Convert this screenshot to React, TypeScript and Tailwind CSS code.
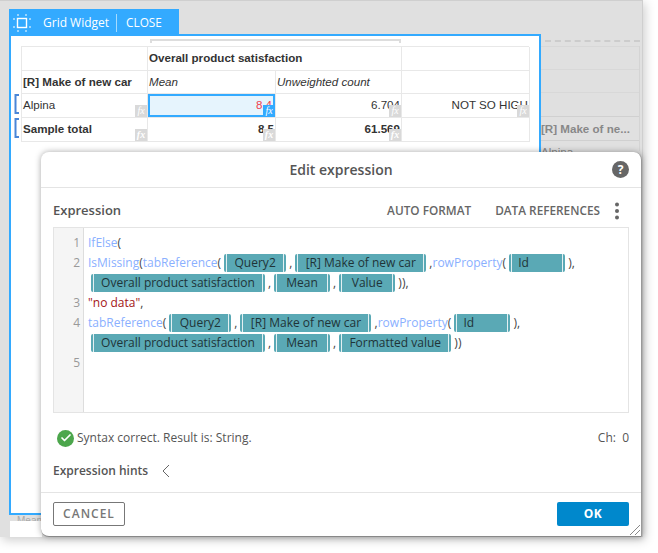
import { Check } from 'lucide-react';

const sans = "font-['Liberation_Sans',Arial,sans-serif]";
const open = "font-['Open_Sans',sans-serif]";

function Fx({ active }: { active?: boolean }) {
  return (
    <span className={`absolute right-0 bottom-0 flex h-[12px] w-[12px] items-center justify-center font-['Liberation_Serif',serif] text-[10px] italic leading-none text-white ${active ? 'bg-[#33aaff]' : 'bg-[#d9d9d9]'}`}>
      fx
    </span>
  );
}

function Bracket({ top }: { top: number }) {
  return (
    <svg className="absolute left-[-8px]" style={{ top }} width="6" height="20" viewBox="0 0 6 20" fill="none">
      <path d="M5 1H1.5V19H5" stroke="#4a86d8" strokeWidth="2" />
    </svg>
  );
}

function Cell({ children, className = '', fx, active }: { children?: React.ReactNode; className?: string; fx?: boolean; active?: boolean }) {
  return (
    <div className={`relative flex items-center overflow-hidden border-r border-b border-[#e8e8e8] px-[1px] pb-[1px] text-[11.6px] text-[#333] ${className}`}>
      {children}
      {fx && <Fx active={active} />}
    </div>
  );
}

function GridTable() {
  return (
    <div className={`relative grid w-[508px] grid-cols-[126px_128px_126px_128px] grid-rows-[24px_23px_24px_24px] border-t border-l border-[#e8e8e8] ${sans}`}>
      <Cell />
      <Cell className="col-span-2 font-bold">Overall product satisfaction</Cell>
      <Cell />
      <Cell className="font-bold">[R] Make of new car</Cell>
      <Cell className="italic">Mean</Cell>
      <Cell className="italic">Unweighted count</Cell>
      <Cell />
      <Cell fx>Alpina</Cell>
      <Cell fx active className="justify-end bg-[#e6f4fd] pr-[3px] text-[#f04050] shadow-[inset_0_0_0_2px_#33aaff]">8.4</Cell>
      <Cell fx className="justify-end">6.704</Cell>
      <Cell fx className="justify-end">NOT SO HIGH</Cell>
      <Cell fx className="font-bold">Sample total</Cell>
      <Cell fx className="justify-end font-bold">8.5</Cell>
      <Cell fx className="justify-end font-bold">61.569</Cell>
      <Cell />
      <Bracket top={47} />
      <Bracket top={71} />
    </div>
  );
}

function Token({ label, w, left }: { label: string; w: number; left?: boolean }) {
  return (
    <span style={{ width: w }} className="inline-flex h-[18px] shrink-0 rounded-[2px] border-x-2 border-[#5aa9b5]">
      <span className={`flex flex-1 items-center border-x border-[#e4f0f2] bg-[#5aa9b5] text-[#1f3438] ${left ? 'pl-[6px]' : 'justify-center'}`}>
        {label}
      </span>
    </span>
  );
}

function Sep() {
  return <span className="mx-[3px]">,</span>;
}

function Fn({ children }: { children: React.ReactNode }) {
  return <span className="text-[#8ab0ff]">{children}</span>;
}

function Line({ children, indent }: { children?: React.ReactNode; indent?: boolean }) {
  return <div className={`flex h-[20px] items-center whitespace-pre ${indent ? 'pl-[7px]' : 'pl-[4px]'}`}>{children}</div>;
}

function Editor() {
  return (
    <div className="flex h-[186px] border border-[#e4e4e4] text-[12px] leading-[20px] text-[#444]">
      <div className="w-[30px] shrink-0 border-r border-[#dddddd] bg-[#f5f5f5] pt-[5px] pr-[3px] text-right text-[#999]">
        <div>1</div>
        <div>2</div>
        <div className="h-[20px]" />
        <div>3</div>
        <div>4</div>
        <div className="h-[20px]" />
        <div>5</div>
      </div>
      <div className="flex-1 pt-[5px]">
        <Line><Fn>IfElse</Fn>(</Line>
        <Line>
          <Fn>IsMissing</Fn>(<Fn>tabReference</Fn>( <Token label="Query2" w={62} /><Sep /><Token label="[R] Make of new car" w={131} /> ,<Fn>rowProperty</Fn>( <Token label="Id" w={56} left /> ),
        </Line>
        <Line indent>
          <Token label="Overall product satisfaction" w={174} /><Sep /><Token label="Mean" w={56} /><Sep /><Token label="Value" w={56} /> )),
        </Line>
        <Line><span className="text-[#a31515]">"no data"</span>,</Line>
        <Line>
          <Fn>tabReference</Fn>( <Token label="Query2" w={62} /><Sep /><Token label="[R] Make of new car" w={131} /> ,<Fn>rowProperty</Fn>( <Token label="Id" w={56} left /> ),
        </Line>
        <Line indent>
          <Token label="Overall product satisfaction" w={174} /><Sep /><Token label="Mean" w={56} /><Sep /><Token label="Formatted value" w={112} /> ))
        </Line>
      </div>
    </div>
  );
}

function Dialog() {
  return (
    <div className={`absolute top-[152px] left-[41px] flex h-[385px] w-[601px] flex-col rounded-t-[8px] rounded-bl-[8px] border-r border-b border-r-[#999] border-b-[#888] bg-white shadow-[0_0_6px_rgba(0,0,0,0.35)] ${open}`}>
      <div className="relative flex h-[36px] shrink-0 items-center justify-center border-b border-[#e4e4e4] text-[14px] font-semibold text-[#555]">
        Edit expression
        <span className="absolute top-[9px] right-[12px] flex h-[17px] w-[17px] items-center justify-center rounded-full bg-[#666] text-[12px] font-bold text-white">?</span>
      </div>
      <div className="flex h-[39px] shrink-0 items-center justify-between px-[12px] pt-[6px] text-[#666]">
        <span className="text-[13px] font-semibold text-[#555]">Expression</span>
        <div className="flex items-center pr-[9px] text-[11.8px] font-semibold">
          <span>AUTO FORMAT</span>
          <span className="ml-[24px]">DATA REFERENCES</span>
          <svg className="ml-[14px]" width="6" height="18" viewBox="0 0 6 18" fill="#666">
            <circle cx="3" cy="2.5" r="2" />
            <circle cx="3" cy="9" r="2" />
            <circle cx="3" cy="15.5" r="2" />
          </svg>
        </div>
      </div>
      <div className="px-[12px]">
        <Editor />
      </div>
      <div className="flex h-[50px] shrink-0 items-center justify-between px-[12px] pl-[16px] text-[12px] text-[#555]">
        <div className="flex items-center">
          <span className="mr-[3px] flex h-[17px] w-[17px] items-center justify-center rounded-full bg-[#4ca64c]">
            <Check size={12} strokeWidth={3.5} color="#fff" />
          </span>
          Syntax correct. Result is: String.
        </div>
        <span>Ch:&nbsp; 0</span>
      </div>
      <div className="flex h-[16px] shrink-0 items-center px-[12px] text-[12px] font-semibold text-[#555]">
        Expression hints
        <svg className="ml-[14px]" width="8" height="14" viewBox="0 0 8 14" fill="none" stroke="#666">
          <path d="M7 1L1 7L7 13" />
        </svg>
      </div>
      <div className="mt-[13px] flex h-[45px] shrink-0 items-start justify-between border-t border-[#e4e4e4] px-[12px] pt-[9px]">
        <button className="h-[24px] w-[72px] rounded-[2px] border border-[#777] text-[12px] font-semibold tracking-[1px] text-[#777]">CANCEL</button>
        <button className="h-[24px] w-[72px] rounded-[2px] bg-[#0088cc] text-[12px] font-bold tracking-[0.5px] text-white">OK</button>
      </div>
      <svg className="absolute right-0 bottom-0" width="12" height="12" viewBox="0 0 12 12" stroke="#888" fill="none">
        <path d="M1 11L11 1M6 11L11 6" />
      </svg>
    </div>
  );
}

function Widget() {
  return (
    <div className="absolute top-[9px] left-[9px] flex h-[506px] w-[532px] flex-col">
      <div className={`flex h-[25px] w-[170px] shrink-0 items-center bg-[#33aaff] pt-[3px] text-[12px] text-white ${open}`}>
        <svg className="ml-[3px]" width="20" height="20" viewBox="0 0 20 20" fill="none" stroke="#fff">
          <rect x="5.5" y="5.5" width="9" height="9" strokeWidth="1.4" />
          <path d="M6 1v2M14 1v2M6 17v2M14 17v2M1 6h2M1 14h2M17 6h2M17 14h2" />
        </svg>
        <span className="ml-[11px] font-medium">Grid Widget</span>
        <span className="mr-[9px] ml-[7px] h-[18px] w-px bg-[#a5dbff]" />
        <span className="text-[11.8px]">CLOSE</span>
      </div>
      <div className="relative flex-1 border-2 border-[#33aaff] bg-white pt-[10px] pl-[10px]">
        <div className="absolute top-[3px] left-[139px] h-[4px] w-[251px] border-x-2 border-t-2 border-[#dddddd]" />
        <GridTable />
      </div>
    </div>
  );
}

function BackTable() {
  return (
    <div className="absolute top-[46px] left-[541px] flex h-[105px] w-[99px] flex-col border-r border-[#d4d4d4]">
      <div className="h-[24px] shrink-0 border-y border-[#d8d8d8]" />
      <div className="h-[23px] shrink-0 border-b border-[#d8d8d8]" />
      <div className="h-[24px] shrink-0 border-b border-[#d0d0d0]" />
      <div className={`flex h-[24px] shrink-0 items-center border-b border-[#d0d0d0] text-[11.6px] font-bold whitespace-nowrap text-[#888] ${sans}`}>
        [R] Make of ne...
      </div>
      <div className={`pt-[2px] text-[11.6px] whitespace-nowrap text-[#888] ${sans}`}>Alpina</div>
    </div>
  );
}

export default function App() {
  return (
    <div className="relative h-[553px] w-[658px] overflow-hidden bg-white">
      <div className="relative h-[537px] w-[643px] border-r border-[#cfcfcf] bg-[#e0e0e0] shadow-[inset_0_1px_0_#cfcfcf,2px_3px_10px_rgba(0,0,0,0.2)]">
        <BackTable />
        <div className="absolute top-[40px] left-[545px] w-[95px] border-t-2 border-dashed border-[#cccccc]" />
        <div className={`absolute top-[513px] left-[17px] text-[10px] text-[#aaa] ${sans}`}>Mean</div>
        <div className="absolute top-[521px] left-[10px] h-[16px] w-[32px] bg-white" />
        <Widget />
        <Dialog />
      </div>
    </div>
  );
}
